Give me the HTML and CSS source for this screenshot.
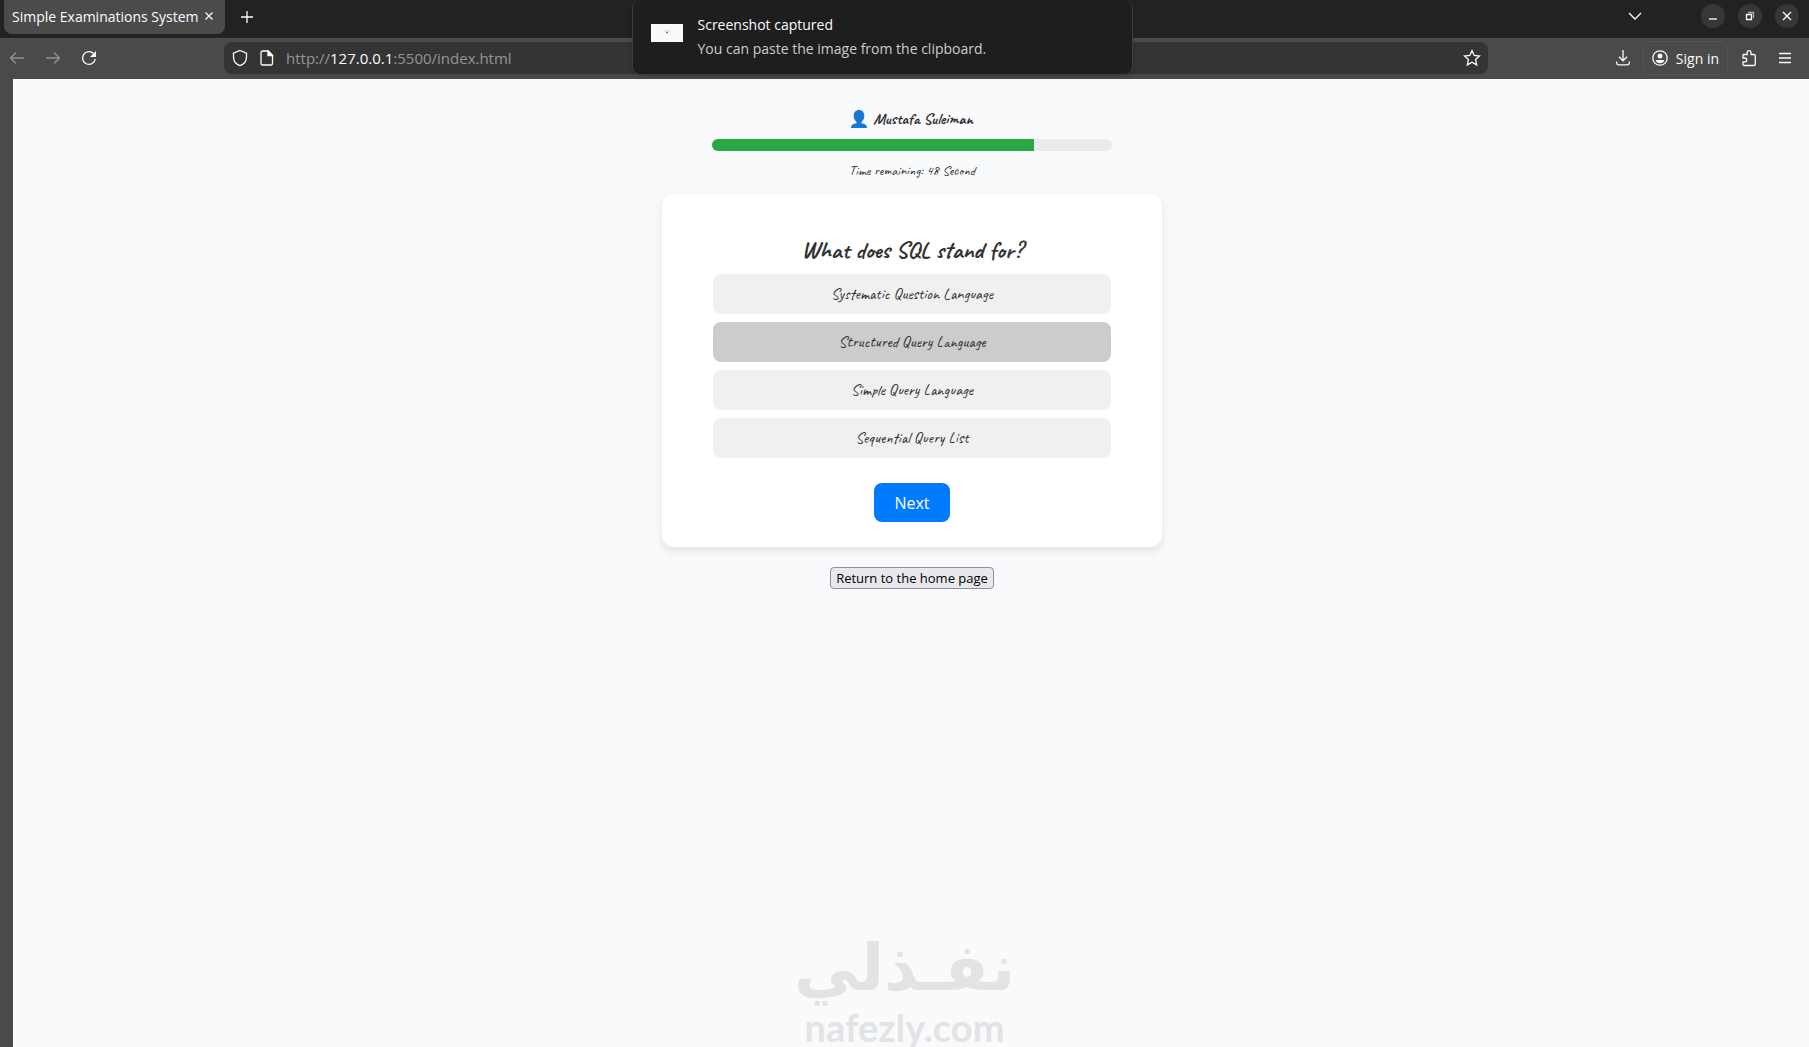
FILE: index.html
```html
<!DOCTYPE html>
<html lang="en">
<head>
    <meta charset="UTF-8">
    <meta name="viewport" content="width=device-width, initial-scale=1.0">
    <title>Simple Examinations System</title>
    <link rel="stylesheet" href="styles.css">
</head>
<body>
    <header class="browser">
        <div class="tab-bar">
            <div class="tab">
                <span>Simple Examinations System</span>
                <button class="icon-button tab-close" aria-label="Close tab">
                    <svg width="8" height="8" viewBox="0 0 8 8"><path d="M.5.5l7 7M7.5.5l-7 7"/></svg>
                </button>
            </div>
            <button class="icon-button new-tab" aria-label="New tab">
                <svg width="12" height="12" viewBox="0 0 12 12"><path d="M6 0v12M0 6h12"/></svg>
            </button>
            <div class="window-buttons">
                <button class="icon-button tab-list" aria-label="List all tabs">
                    <svg width="14" height="8" viewBox="0 0 14 8"><path d="M1 1l6 6 6-6"/></svg>
                </button>
                <button class="round-button" aria-label="Minimize">
                    <svg width="10" height="10" viewBox="0 0 10 10"><path d="M1 8h8"/></svg>
                </button>
                <button class="round-button" aria-label="Restore">
                    <svg width="10" height="10" viewBox="0 0 10 10"><path d="M1.5 3.5h5v5h-5z"/><path d="M3 1.5h5.500v5.500" opacity=".6"/></svg>
                </button>
                <button class="round-button" aria-label="Close">
                    <svg width="10" height="10" viewBox="0 0 10 10"><path d="M1 1l8 8M9 1l-8 8"/></svg>
                </button>
            </div>
        </div>
        <div class="toolbar">
            <div class="nav-buttons">
                <button class="icon-button muted" aria-label="Back">
                    <svg width="16" height="16" viewBox="0 0 16 16"><path d="M15 8H1.500M7 2.500L1.500 8 7 13.500"/></svg>
                </button>
                <button class="icon-button muted" aria-label="Forward">
                    <svg width="16" height="16" viewBox="0 0 16 16"><path d="M1 8h13.500M9 2.500L14.500 8 9 13.500"/></svg>
                </button>
                <button class="icon-button" aria-label="Reload">
                    <svg width="16" height="16" viewBox="0 0 16 16"><path d="M14.300 9A6.400 6.400 0 1 1 12.500 3.500"/><path d="M15 1v6H9z" fill="currentColor" stroke="none"/></svg>
                </button>
            </div>
            <div class="url-bar">
                <svg width="16" height="18" viewBox="0 0 16 18"><path d="M8 1.500l6.500 2.600v4C14.500 12.500 12 15.300 8 16.700 4 15.300 1.500 12.500 1.500 8.100v-4z"/></svg>
                <svg width="14" height="16" viewBox="0 0 14 16"><path d="M2.500 1h5.800L12.500 5.200V13.500a1.500 1.500 0 0 1-1.500 1.500H2.500A1.500 1.500 0 0 1 1 13.500v-11A1.500 1.500 0 0 1 2.500 1z"/><path d="M8 1v4.700h4.500z" fill="currentColor"/></svg>
                <span class="url">http://<b>127.0.0.1</b>:5500/index.html</span>
                <button class="icon-button" aria-label="Bookmark this page">
                    <svg width="18" height="18" viewBox="0 0 18 18"><path d="M9 1.500l2.200 4.900 5.300.6-3.900 3.600 1.100 5.300L9 13.200l-4.700 2.700 1.100-5.300L1.500 7l5.300-.6z"/></svg>
                </button>
            </div>
            <div class="tools">
                <button class="icon-button" aria-label="Downloads">
                    <svg width="14" height="16" viewBox="0 0 14 16"><path d="M7 0v10.500M3 6.800l4 4 4-4M.7 11.500v1.500a1.800 1.800 0 0 0 1.800 1.800h9a1.800 1.800 0 0 0 1.800-1.800v-1.500"/></svg>
                </button>
                <button class="sign-in">
                    <svg width="16" height="16" viewBox="0 0 16 16"><circle cx="8" cy="8" r="7.200"/><circle cx="8" cy="6" r="2.500" fill="currentColor" stroke="none"/><path d="M3.500 10h9c-.6 2.300-2.400 3.200-4.500 3.200S4.100 12.300 3.500 10z" fill="currentColor" stroke="none"/></svg>
                    Sign in
                </button>
                <button class="icon-button extensions" aria-label="Extensions">
                    <svg width="16" height="18" viewBox="0 0 16 18"><path d="M2.500 5.500h3.700V3.500a1.900 1.900 0 0 1 3.800 0v2h3a1.300 1.300 0 0 1 1.300 1.300v8.400a1.300 1.300 0 0 1-1.300 1.300H3.300A1.300 1.300 0 0 1 2 15.200v-2.400h1.800a1.900 1.900 0 0 0 0-3.800H2V6z"/></svg>
                </button>
                <button class="icon-button" aria-label="Menu">
                    <svg width="12" height="12" viewBox="0 0 12 12"><path d="M0 1.500h12M0 6h12M0 10.500h12"/></svg>
                </button>
            </div>
        </div>
        <div class="notification" role="status">
            <svg class="thumb" width="32" height="18" viewBox="0 0 32 18"><path d="M0 0h32v18H0z" fill="#f9fafc" stroke="none"/><path d="M13 6h7M13 7.500h7" stroke="#ddd" stroke-width=".7"/><path d="M15 8.500h2" stroke="#777"/></svg>
            <div>
                <p class="notification-title">Screenshot captured</p>
                <p class="notification-text">You can paste the image from the clipboard.</p>
            </div>
        </div>
    </header>

    <main class="page">
        <div class="user-name">
            <svg width="16" height="18" viewBox="0 0 16 18"><path d="M8 0c3.300 0 5.300 2.400 5.300 5.700 0 2.800-1.300 5-2.800 6.200v1.300c3 .3 5.500 1.500 5.500 4.800H0c0-3.300 2.500-4.500 5.500-4.800v-1.300C4 10.700 2.700 8.500 2.700 5.700 2.700 2.400 4.700 0 8 0z"/></svg>
            Mustafa Suleiman
        </div>
        <div class="progress">
            <div class="progress-fill" style="width: 80.5%"></div>
        </div>
        <p class="timer">Time remaining: 48 Second</p>

        <section class="quiz">
            <h2>What does SQL stand for?</h2>
            <div class="answers">
                <button class="answer">Systematic Question Language</button>
                <button class="answer selected">Structured Query Language</button>
                <button class="answer">Simple Query Language</button>
                <button class="answer">Sequential Query List</button>
            </div>
            <button class="next">Next</button>
        </section>

        <button class="home">Return to the home page</button>
    </main>

    <div class="watermark">
        <span class="mark-ar" lang="ar" dir="rtl">نفـذلي</span>
        <span class="mark-en">nafezly.com</span>
    </div>
</body>
</html>
```
FILE: styles.css
```css
* { box-sizing: border-box; }
body { margin: 0; min-height: 100vh; display: flex; flex-direction: column; position: relative; overflow: hidden; background: #4a4a4a; font-family: "Open Sans", "Noto Sans", sans-serif; font-size: 14px; }
p, h2 { margin: 0; }
button { font-family: inherit; cursor: pointer; }
svg { flex: none; display: block; fill: none; stroke: currentColor; stroke-width: 1.3; }

/* browser */
.browser { color: #fbfbfe; position: relative; }
.tab-bar { height: 38px; background: #222; display: flex; align-items: flex-start; padding-left: 4px; }
.tab { height: 34px; background: #4b4b4b; border-radius: 0 0 8px 8px; display: flex; align-items: center; gap: 6px; padding: 0 12px 2px 8px; white-space: nowrap; }
.icon-button { border: 0; background: none; color: inherit; padding: 0; display: flex; align-items: center; justify-content: center; }
.tab-close { width: 8px; height: 8px; }
.new-tab { width: 44px; height: 33px; }
.window-buttons { margin-left: auto; display: flex; align-items: center; gap: 13px; height: 32px; padding-right: 10px; }
.tab-list { margin-right: 46px; }
.round-button { width: 24px; height: 24px; border: 0; border-radius: 50%; background: #373737; color: #fff; padding: 0; display: flex; align-items: center; justify-content: center; }
.toolbar { height: 41px; background: #4a4a4a; border-top: 1px solid #505050; display: flex; align-items: center; padding-bottom: 2px; }
.nav-buttons { width: 224px; padding-left: 9px; display: flex; gap: 20px; flex: none; }
.muted { color: #919191; }
.url-bar { flex: 1; height: 32px; border-radius: 8px; background: #343434; display: flex; align-items: center; gap: 12px; padding: 0 7px 0 8px; }
.url { flex: 1; color: #949494; font-size: 15px; }
.url b { font-weight: 400; color: #fbfbfe; }
.tools { width: 321px; flex: none; display: flex; align-items: center; justify-content: flex-end; gap: 13px; padding-right: 18px; }
.sign-in { height: 34px; border: 1px solid #555; border-radius: 7px; background: none; color: inherit; font-size: 14px; display: flex; align-items: center; gap: 8px; padding: 0 8px; white-space: nowrap; }
.extensions { margin-right: 9px; }
.notification { position: absolute; top: 0; left: 50%; width: 501px; height: 75px; margin-left: -273px; background: #1e1e1e; border: 1px solid #3d3d3d; border-top: 0; border-radius: 8px; box-shadow: 0 2px 4px rgba(0, 0, 0, 0.15); display: flex; align-items: center; gap: 15px; padding: 0 18px; }
.thumb { margin-bottom: 8px; }
.notification p { line-height: 24px; }
.notification-text { color: #ccc; }

/* exam */
.page { flex: 1; margin-left: 13px; padding: 30px 0 0 2px; background: #f9fafc; color: #333; display: flex; flex-direction: column; align-items: center; }
.user-name, .timer, .quiz h2, .answer { font-family: Caveat, cursive; }
.user-name { display: flex; align-items: center; gap: 6px; font-size: 16px; font-weight: bold; line-height: 20px; }
.user-name svg { fill: #1976d2; stroke: none; }
.progress { width: 400px; height: 12px; margin-top: 10px; border-radius: 6px; background: #e9eaec; overflow: hidden; }
.progress-fill { height: 100%; background: #28a745; }
.timer { margin: 10px 0 13px; font-size: 14px; line-height: 20px; }
.quiz { width: 500px; padding: 42px 51px 25px; background: #fff; border-radius: 12px; box-shadow: 0 4px 10px rgba(0, 0, 0, 0.1); text-align: center; }
.quiz h2 { font-size: 24px; line-height: 28px; margin-bottom: 10px; }
.answers { display: flex; flex-direction: column; gap: 8px; }
.answer { height: 40px; border: 0; border-radius: 8px; background: #f0f0f0; color: #333; font-size: 16px; }
.answer.selected { background: #ccc; }
.next { height: 39px; margin-top: 25px; padding: 0 20px; border: 0; border-radius: 8px; background: #007bff; color: #fff; font-size: 16px; }
.home { height: 22px; margin-top: 20px; padding: 0 5px; border: 1px solid #8f8f9d; border-radius: 4px; background: #e9e9ed; color: #000; font-size: 13px; line-height: 18px; }

.watermark { position: absolute; bottom: 0; left: 0; right: 0; display: flex; flex-direction: column; align-items: center; color: #e2e3e4; font-weight: bold; pointer-events: none; }
.mark-ar { font-family: "DejaVu Sans", sans-serif; font-size: 65px; line-height: 78px; }
.mark-en { font-family: Lato, sans-serif; font-size: 38px; line-height: 40px; }
```
